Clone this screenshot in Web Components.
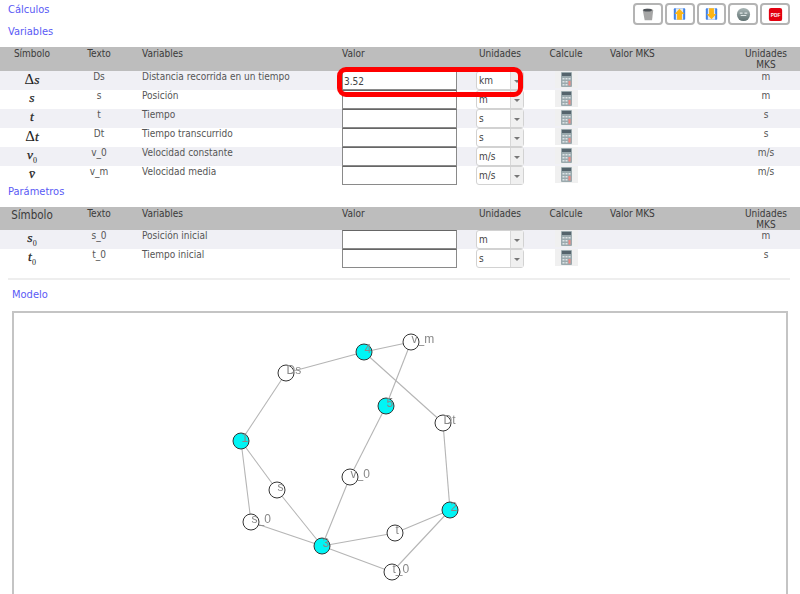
<!DOCTYPE html>
<html lang="es">
<head>
<meta charset="utf-8">
<title>Cálculos</title>
<style>
  html, body { margin: 0; height: 594px; overflow: hidden; background: #fff; }
  body { font: 10px "DejaVu Sans", sans-serif; font-stretch: condensed; color: #444; }
  m-i { font: italic 13.5px "Liberation Serif", serif; color: #222; -webkit-text-stroke: .25px #222; }
  m-i sub { font-size: 8px; font-style: normal; line-height: 0; -webkit-text-stroke: 0; }
  .d { font-style: normal; font-size: 15px; -webkit-text-stroke: 0; }
</style>
</head>
<body>
<template id="icons">
  <svg data-i="trash" width="14" height="14" viewBox="0 0 16 16"><path d="M2 3.5 C4 1.5 12 1.5 14 3.5 L12.6 15 H4.2 Z" fill="#a6a6a6"/><ellipse cx="7.5" cy="3.6" rx="5" ry="1.6" fill="#4e5358"/></svg>
  <svg data-i="up" width="13" height="14" viewBox="0 0 16 16"><rect x="1" y="1" width="14" height="14" rx="1" fill="#3f82e8"/><rect x="3.5" y="1" width="9" height="14" fill="#dfe9f7"/><path d="M8 1.5 L14 8 H11 V15 H5 V8 H2 Z" fill="#fdb515"/></svg>
  <svg data-i="down" width="13" height="14" viewBox="0 0 16 16"><rect x="1" y="1" width="14" height="14" rx="1" fill="#3f82e8"/><rect x="3.5" y="1" width="9" height="14" fill="#dfe9f7"/><path d="M8 14.5 L14 8 H11 V1 H5 V8 H2 Z" fill="#fdb515"/></svg>
  <svg data-i="orb" width="15" height="15" viewBox="0 0 16 16"><defs><linearGradient id="o" x1="0" y1="0" x2="0" y2="1"><stop offset="0" stop-color="#a9b6b6"/><stop offset="1" stop-color="#5f7070"/></linearGradient></defs><circle cx="8" cy="8" r="7" fill="url(#o)"/><path d="M4 6.5 H7 M9 6.5 H12 M5 9 H11" stroke="#dfe6e6" stroke-width="1.2"/></svg>
  <svg data-i="pdf" width="15" height="15" viewBox="0 0 17 17"><rect x="1" y="1" width="15" height="15" rx="2.5" fill="#e3000f"/><text x="8.5" y="11" text-anchor="middle" font-family="Liberation Sans, sans-serif" font-size="5.5" font-weight="700" fill="#fff">PDF</text></svg>
</template>

<script>
const COLS = '64px 70px 208px 134px 48px 84px 124px 68px';

// Botón de la barra superior
class ToolButton extends HTMLElement {
  connectedCallback() {
    if (this.shadowRoot) return;
    this.attachShadow({ mode: 'open' });
    const icon = document.getElementById('icons').content.querySelector(`[data-i="${this.getAttribute('icon')}"]`);
    this.shadowRoot.innerHTML = `<style>
      :host { display: flex; align-items: center; justify-content: center; box-sizing: border-box;
        width: 29.8px; height: 22px; border: 2px solid #b4b4b4; border-radius: 4px; background: #fff; }
    </style>`;
    this.shadowRoot.appendChild(icon.cloneNode(true));
  }
}
customElements.define('tool-button', ToolButton);

class CalcTitle extends HTMLElement {
  constructor() {
    super();
    this.attachShadow({ mode: 'open' });
    this.shadowRoot.innerHTML = `<style>
      :host { display: block; color: #5a5af5; font-size: 11px; line-height: 14px; }
    </style><slot></slot>`;
  }
}
customElements.define('calc-title', CalcTitle);

class TableHead extends HTMLElement {
  connectedCallback() {
    if (this.shadowRoot) return;
    this.attachShadow({ mode: 'open' });
    const isBig = this.hasAttribute('big');
    const big = isBig ? 'font-size:11.5px;padding-top:3px;' : '';
    this.shadowRoot.innerHTML = `<style>
      :host { display: grid; grid-template-columns: ${COLS}; height: ${isBig ? 23 : 24}px; background: #bdbdbd; color: #3a3a3a; line-height: 11px; }
      div { text-align: center; padding-top: 1px; }
      .l { text-align: left; }
      .v { padding-left: 8px; }
      .m { padding-left: 2px; }
    </style>
    <div style="${big}">Símbolo</div><div>Texto</div><div class="l v">Variables</div><div class="l">Valor</div>
    <div>Unidades</div><div>Calcule</div><div class="l m">Valor MKS</div><div>Unidades<br>MKS</div>`;
  }
}
customElements.define('table-head', TableHead);

class VarRow extends HTMLElement {
  connectedCallback() {
    if (this.shadowRoot) return;
    this.attachShadow({ mode: 'open' });
    const a = n => this.getAttribute(n) || '';
    this.shadowRoot.innerHTML = `<style>
      :host { display: grid; grid-template-columns: ${COLS}; height: 19px; line-height: 11px; color: #555; background: #fff; }
      :host(:nth-of-type(odd)) { background: #f0f0f5; }
      .c { text-align: center; }
      .sym { line-height: 12px; }
      .v { padding-left: 8px; }
      input { box-sizing: border-box; width: 115px; height: 19px; margin: 0; padding: 2px 1px 0; border: 1px solid #8a8a8a; border-top-color: #666;
        border-radius: 0; font: 10px "DejaVu Sans", sans-serif; font-stretch: condensed; color: #444; background: #fff; outline: 0; display: block; }
      .sel { box-sizing: border-box; width: 48px; height: 19px; border: 1px solid #d2d2d2; border-radius: 3px; background: #fff;
        display: flex; line-height: 18px; color: #444; padding-left: 2px; }
      .sel span { flex: 1; }
      .sel i { width: 12px; background: #f0f0f0; border-left: 1px solid #d8d8d8; position: relative; }
      .sel i::after { content: ""; position: absolute; left: 3px; top: 8px; border: 3px solid transparent; border-top: 3px solid #777; border-bottom: 0; }
      .calc { width: 23px; height: 17px; margin: 0 auto; background: #f0f0f0; display: flex; align-items: flex-start; justify-content: center; padding-top: 1px; box-sizing: border-box; }
    </style>
    <div class="c sym"><slot></slot></div>
    <div class="c">${a('text')}</div>
    <div class="v">${a('name')}</div>
    <div><input value="${a('value')}"></div>
    <div><div class="sel"><span>${a('unit')}</span><i></i></div></div>
    <div><div class="calc">
      <svg width="11" height="15" viewBox="0 0 11 15"><rect width="11" height="15" rx="1" fill="#9aa9ad"/><rect x="1" y="1" width="9" height="3" fill="#55646c"/>
      <path d="M1.5 6h2v1.5h-2zM4.5 6h2v1.5h-2zM1.5 9h2v1.5h-2zM4.5 9h2v1.5h-2zM1.5 12h2v1.5h-2zM4.5 12h2v1.5h-2z" fill="#dde4e6"/><rect x="7.5" y="9" width="2" height="4.5" fill="#ef8a82"/><rect x="7.5" y="6" width="2" height="1.5" fill="#dde4e6"/></svg>
    </div></div>
    <div></div>
    <div class="c">${a('mks')}</div>`;
  }
}
customElements.define('var-row', VarRow);

class MI extends HTMLElement {}
customElements.define('m-i', MI);

// Grafo del modelo
class ModelGraph extends HTMLElement {
  constructor() {
    super();
    this.attachShadow({ mode: 'open' });
    const n = {
      Ds: [286,373,'Ds'], e4: [364,352,'4',1], vm: [411,342,'v_m'], e5: [386,406,'5',1], Dt: [443,423,'Dt'],
      e1: [241,441,'1',1], v0: [350,477,'v_0'], s: [277,490,'s'], s0: [251,522,'s_0'], e3: [322,546,'3',1],
      t: [395,533,'t'], e2: [450,510,'2',1], t0: [392,572,'t_0']
    };
    const edges = ['Ds e4','e4 vm','vm e5','e4 Dt','Ds e1','e5 v0','Dt e2','e1 s','e1 s0','s e3','v0 e3','s0 e3','t e3','t e2','e3 t0','e2 t0'];
    // coordenadas de la página -> lienzo (el marco empieza en 14,313)
    const X = 14, Y = 313;
    let svg = '';
    for (const e of edges) {
      const [a, b] = e.split(' ').map(k => n[k]);
      svg += `<line x1="${a[0]-X}" y1="${a[1]-Y}" x2="${b[0]-X}" y2="${b[1]-Y}" stroke="#b5b5b5" stroke-width="1.1"/>`;
    }
    for (const k in n) {
      const [x, y, label, on] = n[k];
      svg += `<circle cx="${x-X}" cy="${y-Y}" r="8" fill="${on ? '#00f5f5' : '#fff'}" stroke="#333" stroke-width="1"/>`;
      svg += `<text x="${x-X+0.5}" y="${y-Y+0.5}" font-size="12" fill="#888">${label}</text>`;
    }
    this.shadowRoot.innerHTML = `<style>
      :host { display: block; box-sizing: border-box; margin: 0 12px; height: 283px; border: 2px solid #c4c4c4; border-bottom: 0; }
      svg { display: block; font-family: "Liberation Sans", sans-serif; will-change: transform; }
    </style><svg width="772" height="281">${svg}</svg>`;
  }
}
customElements.define('model-graph', ModelGraph);

// Marco rojo sobre la primera fila
class RedMark extends HTMLElement {
  constructor() {
    super();
    this.attachShadow({ mode: 'open' });
    this.shadowRoot.innerHTML = `<style>
      :host { position: absolute; left: 337px; top: 67px; width: 185.5px; height: 30px; box-sizing: border-box; border: 5px solid #f00; border-radius: 9px; }
    </style>`;
  }
}
customElements.define('red-mark', RedMark);

class CalcPage extends HTMLElement {
  constructor() {
    super();
    this.attachShadow({ mode: 'open' });
    this.shadowRoot.innerHTML = `<style>
      :host { display: block; position: relative; }
      .top { display: flex; justify-content: space-between; padding: 3px 10px 0 8px; height: 47px; box-sizing: border-box; }
      .titles { display: flex; flex-direction: column; gap: 8px; }
      .tools { display: flex; gap: 2px; align-self: flex-start; }
      .p1 { padding-left: 8px; height: 22px; box-sizing: border-box; }
      hr { margin: 10px 10px 0 8px; border: 0; border-top: 2px solid #eee; }
      .p2 { padding: 8px 0 9px 12px; }
    </style>
    <div class="top">
      <div class="titles"><calc-title>Cálculos</calc-title><calc-title>Variables</calc-title></div>
      <div class="tools">
        <tool-button icon="trash"></tool-button><tool-button icon="up"></tool-button><tool-button icon="down"></tool-button><tool-button icon="orb"></tool-button><tool-button icon="pdf"></tool-button>
      </div>
    </div>
    <slot name="vars"></slot>
    <div class="p1"><calc-title>Parámetros</calc-title></div>
    <slot name="pars"></slot>
    <hr>
    <div class="p2"><calc-title>Modelo</calc-title></div>
    <slot name="graph"></slot>
    <red-mark></red-mark>`;
  }
}
customElements.define('calc-page', CalcPage);
</script>

<calc-page>
  <div slot="vars">
    <table-head></table-head>
    <section>
      <var-row text="Ds" name="Distancia recorrida en un tiempo" value="3.52" unit="km" mks="m"><m-i><span class="d">Δ</span>s</m-i></var-row>
      <var-row text="s" name="Posición" unit="m" mks="m"><m-i>s</m-i></var-row>
      <var-row text="t" name="Tiempo" unit="s" mks="s"><m-i>t</m-i></var-row>
      <var-row text="Dt" name="Tiempo transcurrido" unit="s" mks="s"><m-i><span class="d">Δ</span>t</m-i></var-row>
      <var-row text="v_0" name="Velocidad constante" unit="m/s" mks="m/s"><m-i>v<sub>0</sub></m-i></var-row>
      <var-row text="v_m" name="Velocidad media" unit="m/s" mks="m/s"><m-i>v̄</m-i></var-row>
    </section>
  </div>
  <div slot="pars">
    <table-head big></table-head>
    <section>
      <var-row text="s_0" name="Posición inicial" unit="m" mks="m"><m-i>s<sub>0</sub></m-i></var-row>
      <var-row text="t_0" name="Tiempo inicial" unit="s" mks="s"><m-i>t<sub>0</sub></m-i></var-row>
    </section>
  </div>
  <model-graph slot="graph"></model-graph>
</calc-page>
</body>
</html>
